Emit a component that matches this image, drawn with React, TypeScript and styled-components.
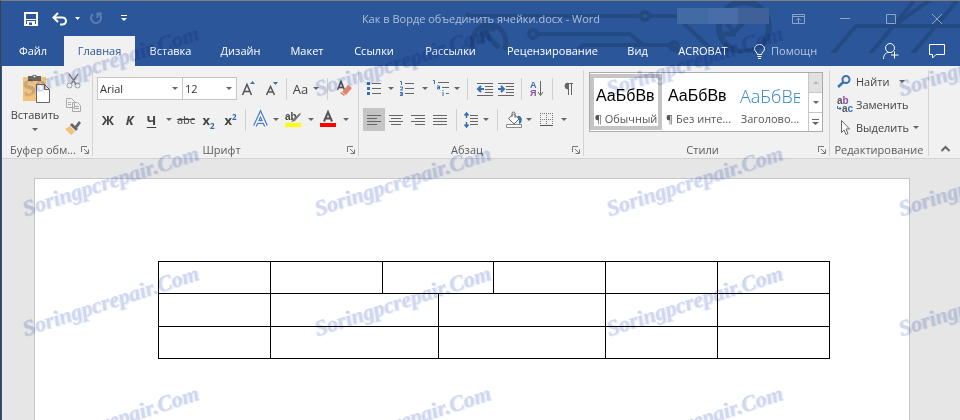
import React from "react";
import styled, { createGlobalStyle } from "styled-components";

const GlobalStyle = createGlobalStyle`
  *, *::before, *::after { box-sizing: border-box; }
  body {
    margin: 0;
    background: #e6e6e6;
    color: #444;
    font: 11px/16px "Open Sans", "Noto Sans", sans-serif;
  }
  button, select { font: inherit; color: inherit; }
  svg { display: block; flex: none; overflow: visible; }
`;

const Window = styled.div`
  position: relative;
  display: flex;
  flex-direction: column;
  min-height: 100vh;
  overflow: hidden;
  border-top: 1px solid #7f7f7f;
  border-left: 1px solid #3f3f46;
  box-shadow: inset 1px 0 #2b579a;
  padding-left: 1px;
`;

const Header = styled.header`
  position: relative;
  background: #2b579a;
  color: #fff;
`;

const Circuit = styled.svg`
  position: absolute;
  top: 0;
  right: 0;
  overflow: hidden;
  fill: none;
  stroke: #244a84;
  stroke-width: 4;
`;

const TitleBar = styled.div`
  position: relative;
  display: grid;
  grid-template-columns: 1fr auto 1fr;
  align-items: center;
  height: 35px;
`;

const QuickAccess = styled.div`
  display: flex;
  align-items: center;
  padding-left: 16px;
`;

const Title = styled.h1`
  margin: 0;
  font-size: 11px;
  font-weight: 400;
  color: #b0bfda;
  white-space: nowrap;
`;

const WindowControls = styled.div`
  display: flex;
  align-items: center;
  justify-content: flex-end;
  color: #8ca3ca;
`;

const Account = styled.div`
  display: flex;
  width: 92px;
  height: 16px;
  margin: 0 5px 6px 0;
`;

const AccountPart = styled.span<{ $color: string }>`
  flex: 1;
  background: ${(p) => p.$color};
`;

const IconButton = styled.button<{ $w: number; $on?: boolean }>`
  display: flex;
  flex: none;
  align-items: center;
  justify-content: center;
  width: ${(p) => p.$w}px;
  height: 23px;
  padding: 0;
  border: 0;
  background: ${(p) => (p.$on ? "#c5c5c5" : "transparent")};
`;

const TabBar = styled.nav`
  position: relative;
  display: flex;
  height: 30px;
  color: #fff;
`;

const Tab = styled.button<{ $w: number; $active?: boolean }>`
  flex: none;
  width: ${(p) => p.$w}px;
  padding: 0;
  border: 0;
  background: ${(p) => (p.$active ? "#f1f1f1" : "transparent")};
  color: ${(p) => (p.$active ? "#2b579a" : "#fff")};
  white-space: nowrap;
`;

const TellMe = styled.button`
  display: flex;
  align-items: center;
  gap: 6px;
  margin: 0 auto 0 10px;
  padding: 0;
  border: 0;
  background: none;
  color: #b8c6df;
`;

const TabActions = styled.div`
  display: flex;
  align-items: center;
  color: #fff;
`;

const Ribbon = styled.section`
  display: flex;
  height: 93px;
  padding: 4px 0 2px;
  background: #f1f1f1;
  border-bottom: 1px solid #d2d2d2;
`;

const Group = styled.div<{ $w?: number }>`
  display: flex;
  flex-direction: column;
  flex: ${(p) => (p.$w ? `0 0 ${p.$w}px` : "1 1 0")};
  min-width: 0;
  border-right: 1px solid #d4d4d4;
`;

const GroupBody = styled.div`
  display: flex;
  flex: 1;
  padding: 0 4px;
`;

const GroupFoot = styled.div`
  display: flex;
  align-items: center;
  height: 12px;
  padding: 0 3px;
  color: #5c5c5c;
`;

const GroupName = styled.span`
  flex: 1;
  text-align: center;
  white-space: nowrap;
`;

const Launcher = styled.button`
  width: 8px;
  padding: 0;
  border: 0;
  background: none;
`;

const Rows = styled.div`
  display: flex;
  flex-direction: column;
  gap: 8px;
  padding-top: 7px;
`;

const Row = styled.div`
  display: flex;
  align-items: center;
  height: 23px;
`;

const Divider = styled.span<{ $w: number }>`
  display: flex;
  flex: none;
  justify-content: center;
  width: ${(p) => p.$w}px;
  height: 22px;
  &::before { content: ""; width: 1px; background: #d0d0d0; }
`;

const Combo = styled.label<{ $w: number }>`
  display: flex;
  align-items: center;
  width: ${(p) => p.$w}px;
  height: 23px;
  padding: 0 4px 0 2px;
  border: 1px solid #c6c6c6;
  background: #fff;
  & + & { margin-left: -1px; }
`;

const ComboSelect = styled.select`
  flex: 1;
  min-width: 0;
  padding: 0;
  border: 0;
  appearance: none;
  background: none;
  color: #333;
`;

const Glyph = styled.span<{ $size: number; $bold?: boolean; $italic?: boolean; $line?: string }>`
  font-size: ${(p) => p.$size}px;
  line-height: 20px;
  font-weight: ${(p) => (p.$bold ? 700 : 400)};
  font-style: ${(p) => (p.$italic ? "italic" : "normal")};
  text-decoration: ${(p) => p.$line ?? "none"};
  text-underline-offset: 2px;
  sub, sup { font-size: 8px; line-height: 8px; color: #2b6cb0; }
`;

const PasteButton = styled.button`
  display: flex;
  flex-direction: column;
  align-items: center;
  width: 58px;
  padding: 3px 0 0;
  border: 0;
  background: none;
`;

const PasteLabel = styled.span`
  margin: 3px 0 5px;
  line-height: 16px;
`;

const ClipTools = styled.div`
  display: flex;
  flex-direction: column;
`;

const Gallery = styled.div`
  display: flex;
  flex: 1;
  align-self: flex-start;
  height: 60px;
  margin: 2px 2px 0 1px;
  border: 1px solid #ababab;
  background: #fff;
`;

const StyleItems = styled.div`
  display: flex;
  flex: 1;
  min-width: 0;
  padding: 1px 0;
  overflow: hidden;
`;

const StyleCard = styled.button<{ $on?: boolean }>`
  display: flex;
  flex: none;
  flex-direction: column;
  justify-content: flex-end;
  gap: 4px;
  width: 72px;
  padding: 0;
  border: 4px solid ${(p) => (p.$on ? "#c5c5c5" : "transparent")};
  background: none;
`;

const Sample = styled.span<{ $heading?: boolean }>`
  width: 60px;
  margin-left: 2px;
  overflow: hidden;
  color: ${(p) => (p.$heading ? "#2e86c8" : "#000")};
  font: ${(p) =>
    p.$heading
      ? '300 18px/24px "Open Sans", sans-serif'
      : '16px/24px "Liberation Sans", Arial, sans-serif'};
  text-align: left;
`;

const StyleName = styled.span`
  line-height: 14px;
  white-space: nowrap;
  color: #555;
`;

const GalleryNav = styled.div`
  display: grid;
  grid-template-rows: repeat(3, 1fr);
  width: 14px;
`;

const NavButton = styled.button<{ $off?: boolean }>`
  display: flex;
  align-items: center;
  justify-content: center;
  padding: 0;
  border: 0;
  border-left: 1px solid #c6c6c6;
  background: ${(p) => (p.$off ? "#e1e1e1" : "#fff")};
  & + & { border-top: 1px solid #c6c6c6; }
`;

const EditList = styled.div`
  display: flex;
  flex-direction: column;
  padding: 0 0 0 3px;
`;

const EditButton = styled.button`
  display: flex;
  align-items: center;
  gap: 4px;
  height: 23px;
  padding: 0;
  border: 0;
  background: none;
  white-space: nowrap;
`;

const Collapse = styled.div`
  display: flex;
  align-items: flex-end;
  width: 31px;
  padding-left: 5px;
`;

const CollapseButton = styled.button`
  display: flex;
  justify-content: center;
  width: 22px;
  padding: 4px 0;
  border: 0;
  background: none;
`;

const Workspace = styled.main`
  display: flex;
  flex: 1;
  padding: 19px 50px 0 32px;
  background: #e6e6e6;
`;

const Page = styled.article`
  flex: 1;
  padding: 82px 79px 60px 123px;
  background: #fff;
  border: 1px solid #c6c6c6;
  border-bottom: 0;
`;

const DocTable = styled.table`
  width: 100%;
  border-collapse: collapse;
  table-layout: fixed;
`;

const Cell = styled.td`
  height: 32px;
  padding: 0;
  border: 1px solid #000;
  tr:nth-child(2) > & { height: 33px; }
`;

const Watermarks = styled.div`
  position: absolute;
  inset: -20px 0 0 26px;
  display: grid;
  grid-template-columns: repeat(auto-fill, 292px);
  grid-auto-rows: 120px;
  width: 1168px;
  pointer-events: none;
  mix-blend-mode: multiply;
`;

const Watermark = styled.span`
  align-self: end;
  justify-self: start;
  transform: rotate(-18deg);
  transform-origin: left bottom;
  color: #d2d6ee;
  text-shadow: 1px 1px #e6eefb, -1px 0 #eaf2fd;
  font: italic 700 22px/24px "Liberation Serif", serif;
`;

type IconProps = { w: number; h: number; children: React.ReactNode };
const Icon = ({ w, h, children }: IconProps) => (
  <svg width={w} height={h} viewBox={`0 0 ${w} ${h}`} fill="none" stroke="currentColor" aria-hidden="true">
    {children}
  </svg>
);

const Caret = () => (
  <Icon w={6} h={3}>
    <path d="M0 0h6L3 3z" fill="#666" stroke="none" />
  </Icon>
);

const CaretButton = ({ w, label }: { w: number; label: string }) => (
  <IconButton $w={w} aria-label={label}>
    <Caret />
  </IconButton>
);

const Foot = ({ name, launcher = true }: { name: string; launcher?: boolean }) => (
  <GroupFoot>
    <GroupName>{name}</GroupName>
    {launcher && (
      <Launcher aria-label={`${name}: параметры`}>
        <Icon w={8} h={8}>
          <path d="M.5 6V.5H6M3 3l4 4M7.500 3.500v4h-4" stroke="#777" />
        </Icon>
      </Launcher>
    )}
  </GroupFoot>
);

const tabs: [string, number][] = [
  ["Файл", 62], ["Главная", 71], ["Вставка", 71], ["Дизайн", 69], ["Макет", 64],
  ["Ссылки", 70], ["Рассылки", 83], ["Рецензирование", 121], ["Вид", 49], ["ACROBAT", 82],
];

const aligns: [string, string][] = [
  ["По левому краю", "M0 .5h14M0 3.500h10M0 6.500h14M0 9.500h10"],
  ["По центру", "M0 .5h14M2 3.500h10M0 6.500h14M2 9.500h10"],
  ["По правому краю", "M0 .5h14M4 3.500h10M0 6.500h14M4 9.500h10"],
  ["По ширине", "M0 .5h14M0 3.500h14M0 6.500h14M0 9.500h14"],
];

const documentRows = [[2, 2, 2, 2, 2, 2], [2, 3, 3, 2, 2], [2, 3, 3, 2, 2]];

const smallText = { fontFamily: "Liberation Sans", fontWeight: 700, stroke: "none" } as const;

function AppHeader() {
  return (
    <Header>
      <Circuit width="520" height="52" viewBox="440 1 520 52" aria-hidden="true">
        <path d="M474 50a17 17 0 1 1 30 0M480 29h15M482 28v16M483 31l16 17" strokeWidth="5" />
        <path d="M466 14l4 2h172M537 34h93l13 11M578 50l5-5h88l8 8" />
        <circle cx="533" cy="34" r="4" />
        <circle cx="645" cy="16" r="4" />
        <path d="M649 16h27l36 34h18" />
        <circle cx="674" cy="46" r="4" />
        <circle cx="744" cy="27" r="25" strokeWidth="6" />
        <path d="M724 20l10 12 22-22M722 34h14" strokeWidth="5" />
        <path d="M832 54l24-28h104M870 54L914 1M912 54L957 1M893 26L936-4" />
      </Circuit>
      <TitleBar>
        <QuickAccess>
          <IconButton $w={26} aria-label="Сохранить">
            <Icon w={14} h={14}>
              <path d="M1 1h12v12H1z" stroke="#fff" strokeWidth="2" />
              <path d="M2 7.500h10" stroke="#fff" />
              <path d="M3 9h8v4H3z" fill="#fff" stroke="none" />
              <path d="M5 10.500h3V13H5z" fill="#2b579a" stroke="none" />
            </Icon>
          </IconButton>
          <IconButton $w={31} aria-label="Отменить">
            <Icon w={15} h={14}>
              <path d="M6 1L1.500 5.500 6 10M2 5.500h8.500a3.500 3.500 0 0 1 0 7H8" stroke="#fff" strokeWidth="2" />
            </Icon>
          </IconButton>
          <IconButton $w={5} aria-label="Список отмены">
            <Icon w={5} h={3}><path d="M0 0h5L2.500 3z" fill="#fff" stroke="none" /></Icon>
          </IconButton>
          <IconButton $w={31} aria-label="Повторить">
            <Icon w={14} h={13}>
              <path d="M4 2a5 5 0 1 0 6 0M8.500 6V1.500H13" stroke="#5a7db5" strokeWidth="2" />
            </Icon>
          </IconButton>
          <IconButton $w={26} aria-label="Настройка панели">
            <Icon w={6} h={7}>
              <path d="M0 .5h6" stroke="#fff" />
              <path d="M0 3h6L3 6z" fill="#fff" stroke="none" />
            </Icon>
          </IconButton>
        </QuickAccess>
        <Title>Как в Ворде объединить ячейки.docx - Word</Title>
        <WindowControls>
          <Account>
            {["#426ba5", "#496da8", "#3f6099"].map((c) => <AccountPart key={c} $color={c} />)}
          </Account>
          <IconButton $w={48} aria-label="Параметры ленты">
            <Icon w={13} h={10}>
              <path d="M.5.5h12v9H.5zM0 2.500h13M6.500 9V4M4 6.500L6.500 4 9 6.500" />
            </Icon>
          </IconButton>
          <IconButton $w={46} aria-label="Свернуть"><Icon w={10} h={1}><path d="M0 .5h10" /></Icon></IconButton>
          <IconButton $w={46} aria-label="Развернуть"><Icon w={10} h={10}><path d="M.5.5h9v9h-9z" /></Icon></IconButton>
          <IconButton $w={46} aria-label="Закрыть"><Icon w={10} h={10}><path d="M0 0l10 10M10 0L0 10" /></Icon></IconButton>
        </WindowControls>
      </TitleBar>
      <TabBar>
        {tabs.map(([name, w]) => (
          <Tab key={name} $w={w} $active={name === "Главная"}>{name}</Tab>
        ))}
        <TellMe>
          <Icon w={11} h={15}>
            <path d="M3.500 10.500c0-2-3-3-3-6a5 4 0 0 1 10 0c0 3-3 4-3 6zM3.500 12.500h4M4 14.500h3" stroke="#fff" />
          </Icon>
          Помощн
        </TellMe>
        <TabActions>
          <IconButton $w={46} aria-label="Общий доступ">
            <Icon w={16} h={16}>
              <circle cx="7" cy="5" r="4.500" />
              <path d="M.5 16c0-4 2-6.500 5-6.500h3M11.500 8.500v7M8 12h7.500" />
            </Icon>
          </IconButton>
          <IconButton $w={46} aria-label="Примечания">
            <Icon w={16} h={15}><path d="M.5.5h15v10H7l-3.500 3.500v-3.500h-3z" /></Icon>
          </IconButton>
        </TabActions>
      </TabBar>
    </Header>
  );
}

function ClipboardGroup() {
  return (
    <Group $w={91}>
      <GroupBody>
        <PasteButton>
          <Icon w={31} h={31}>
            <path d="M3 4h23v24H3z" fill="#f2c37c" stroke="none" />
            <path d="M8 3h4a3 3 0 0 1 5 0h4v5H8z" fill="#666" stroke="none" />
            <circle cx="14.500" cy="3.500" r="1" fill="#f1f1f1" stroke="none" />
            <path d="M16.500 11.500h8l5 5v13h-13zM24.500 11.500v5h5" fill="#fff" stroke="#666" />
          </Icon>
          <PasteLabel>Вставить</PasteLabel>
          <Caret />
        </PasteButton>
        <ClipTools>
          <IconButton $w={18} aria-label="Вырезать">
            <Icon w={15} h={15}>
              <path d="M3 0l7 10M12 0L5 10" stroke="#888" strokeWidth="1.500" />
              <circle cx="3.500" cy="11.500" r="2.500" stroke="#999" />
              <circle cx="11.500" cy="11.500" r="2.500" stroke="#999" />
            </Icon>
          </IconButton>
          <IconButton $w={18} aria-label="Копировать">
            <Icon w={15} h={14}>
              <path d="M.5.5h5l3 3v6h-8zM6.500 4.500h5l3 3v6h-8z" fill="#f1f1f1" stroke="#aaa" />
              <path d="M2 4.500h3M2 6.500h3M8 8.500h5M8 10.500h5" stroke="#aaa" />
            </Icon>
          </IconButton>
          <IconButton $w={18} aria-label="Формат по образцу">
            <Icon w={16} h={14}>
              <path d="M0 8l5-3 5 6-4 3z" fill="#f2c37c" stroke="none" />
              <path d="M5 4l2-2 6 6-2 2zM10 5l4-5 2 2-4 5z" fill="#666" stroke="none" />
            </Icon>
          </IconButton>
        </ClipTools>
      </GroupBody>
      <Foot name="Буфер обм..." />
    </Group>
  );
}

function FontGroup() {
  return (
    <Group $w={266}>
      <GroupBody>
        <Rows>
          <Row>
            <Combo $w={86}>
              <ComboSelect aria-label="Шрифт"><option>Arial</option></ComboSelect>
              <Caret />
            </Combo>
            <Combo $w={55}>
              <ComboSelect aria-label="Размер шрифта"><option>12</option></ComboSelect>
              <Caret />
            </Combo>
            <IconButton $w={24} aria-label="Увеличить размер">
              <Icon w={14} h={15}>
                <path d="M.5 14L5 3.500 9.500 14M2 10.500h6" stroke="#555" strokeWidth="1.500" />
                <path d="M8 3h5L10.500 0z" fill="#3b6fb5" stroke="none" />
              </Icon>
            </IconButton>
            <IconButton $w={22} aria-label="Уменьшить размер">
              <Icon w={13} h={15}>
                <path d="M.5 14L4.500 5.500 8.500 14M2 11h5" stroke="#555" strokeWidth="1.500" />
                <path d="M7 1h5L9.500 4z" fill="#3b6fb5" stroke="none" />
              </Icon>
            </IconButton>
            <Divider $w={7} />
            <IconButton $w={21} aria-label="Регистр"><Glyph $size={13}>Aa</Glyph></IconButton>
            <CaretButton w={9} label="Варианты регистра" />
            <Divider $w={15} />
            <IconButton $w={18} aria-label="Удалить форматирование">
              <Icon w={15} h={16}>
                <path d="M.5 9L4 .5 7.500 9M2 6.500h4" stroke="#555" strokeWidth="1.500" />
                <path d="M5 11l6-7 4 3-6 7z" fill="#e2836b" stroke="none" />
                <path d="M3 12l1-1 4 3-1 1z" fill="#e2836b" stroke="none" />
              </Icon>
            </IconButton>
          </Row>
          <Row>
            <IconButton $w={22} aria-label="Полужирный"><Glyph $size={13} $bold>Ж</Glyph></IconButton>
            <IconButton $w={21} aria-label="Курсив"><Glyph $size={13} $bold $italic>К</Glyph></IconButton>
            <IconButton $w={23} aria-label="Подчеркнутый"><Glyph $size={13} $bold $line="underline">Ч</Glyph></IconButton>
            <CaretButton w={11} label="Варианты подчеркивания" />
            <IconButton $w={24} aria-label="Зачеркнутый"><Glyph $size={11} $line="line-through">abc</Glyph></IconButton>
            <IconButton $w={21} aria-label="Подстрочный"><Glyph $size={13} $bold>x<sub>2</sub></Glyph></IconButton>
            <IconButton $w={23} aria-label="Надстрочный"><Glyph $size={13} $bold>x<sup>2</sup></Glyph></IconButton>
            <Divider $w={7} />
            <IconButton $w={22} aria-label="Текстовые эффекты">
              <Icon w={15} h={15}>
                <path d="M2 14L7.500 2 13 14M4 10h7" stroke="#4a7cc0" strokeWidth="4" />
                <path d="M2 14L7.500 2 13 14M4 10h7" stroke="#fff" strokeWidth="1.500" />
              </Icon>
            </IconButton>
            <CaretButton w={9} label="Варианты эффектов" />
            <IconButton $w={27} aria-label="Цвет выделения">
              <Icon w={17} h={17}>
                <text x="0" y="9" fontSize="10" fill="#444" {...smallText}>ab</text>
                <path d="M6 11l2-3 7-6 1 1-6 7z" fill="#777" stroke="none" />
                <path d="M0 12h16v4H0z" fill="#ff0" stroke="none" />
              </Icon>
            </IconButton>
            <CaretButton w={8} label="Цвета выделения" />
            <IconButton $w={26} aria-label="Цвет текста">
              <Icon w={16} h={17}>
                <path d="M4 10.500L8 1l4 9.500M5 7.500h6" stroke="#555" strokeWidth="2" />
                <path d="M0 12h16v4H0z" fill="#f00" stroke="none" />
              </Icon>
            </IconButton>
            <CaretButton w={9} label="Цвета текста" />
          </Row>
        </Rows>
      </GroupBody>
      <Foot name="Шрифт" />
    </Group>
  );
}

function ParagraphGroup() {
  return (
    <Group $w={225}>
      <GroupBody>
        <Rows>
          <Row>
            <IconButton $w={22} aria-label="Маркеры">
              <Icon w={14} h={15}>
                <path d="M5 2.500h9M5 7.500h9M5 12.500h9" stroke="#666" />
                <path d="M0 1h3v3H0zM0 6h3v3H0zM0 11h3v3H0z" fill="#3b6fb5" stroke="none" />
              </Icon>
            </IconButton>
            <CaretButton w={11} label="Виды маркеров" />
            <IconButton $w={23} aria-label="Нумерация">
              <Icon w={15} h={17}>
                <path d="M5 3.500h9M5 8.500h9M5 13.500h9" stroke="#666" />
                <path d="M0 1.500h1.500V5M0 7h2.500v1.500L.5 10H3M0 12.500h2.500v1.500h-2 2v1.500H0" stroke="#3b6fb5" />
              </Icon>
            </IconButton>
            <CaretButton w={11} label="Виды нумерации" />
            <IconButton $w={22} aria-label="Многоуровневый список">
              <Icon w={17} h={17}>
                <path d="M5 2.500h11M9 7.500h7M13 13.500h3" stroke="#666" />
                <path d="M0 .5h1.500V4M4 6h2.500v3H4.500V7.500h2M10 10v1M10 12v4" stroke="#3b6fb5" />
              </Icon>
            </IconButton>
            <CaretButton w={9} label="Виды списков" />
            <Divider $w={13} />
            <IconButton $w={21} aria-label="Уменьшить отступ">
              <Icon w={16} h={14}>
                <path d="M0 1.500h16M8 4.500h8M8 7.500h8M8 10.500h8M0 13.500h16" stroke="#666" />
                <path d="M1 7h6M4 4L1 7l3 3" stroke="#3b6fb5" strokeWidth="2" />
              </Icon>
            </IconButton>
            <IconButton $w={22} aria-label="Увеличить отступ">
              <Icon w={16} h={14}>
                <path d="M0 1.500h16M8 4.500h8M8 7.500h8M8 10.500h8M0 13.500h16" stroke="#666" />
                <path d="M0 7h6M3 4l3 3-3 3" stroke="#3b6fb5" strokeWidth="2" />
              </Icon>
            </IconButton>
            <Divider $w={9} />
            <IconButton $w={22} aria-label="Сортировка">
              <Icon w={14} h={16}>
                <text x="0" y="7" fontSize="9" fill="#3b6fb5" {...smallText}>А</text>
                <text x="0" y="15" fontSize="9" fill="#8650a8" {...smallText}>Я</text>
                <path d="M10.500 0v14M8 11l2.500 3.500L13 11" stroke="#666" />
              </Icon>
            </IconButton>
            <Divider $w={9} />
            <IconButton $w={22} aria-label="Непечатаемые знаки">
              <Icon w={10} h={12}>
                <path d="M5 0a3 3 0 0 0 0 6z" fill="#666" stroke="#666" />
                <path d="M4 .5h6M5.500 0v12M8.500 0v12" stroke="#666" />
              </Icon>
            </IconButton>
          </Row>
          <Row>
            {aligns.map(([label, d], i) => (
              <IconButton key={label} $w={22} $on={i === 0} aria-label={label}>
                <Icon w={14} h={10}><path d={d} stroke="#666" /></Icon>
              </IconButton>
            ))}
            <Divider $w={10} />
            <IconButton $w={20} aria-label="Интервал">
              <Icon w={14} h={16}>
                <path d="M6 3.500h8M6 6.500h8M6 9.500h8M6 12.500h8" stroke="#666" />
                <path d="M2.500 1v5M.5 3.500l2-2.500 2 2.500M2.500 10v5M.5 12.500l2 2.500 2-2.500" stroke="#3b6fb5" strokeWidth="1.500" />
              </Icon>
            </IconButton>
            <CaretButton w={9} label="Варианты интервала" />
            <Divider $w={14} />
            <IconButton $w={20} aria-label="Заливка">
              <Icon w={17} h={16}>
                <path d="M2.500 6.500l5-4.500 5.500 5-5 5z" fill="#fff" stroke="#666" />
                <path d="M6 5V1.500a1.500 1.500 0 0 1 3 0V6" stroke="#666" />
                <path d="M11 4h3l2 3-1 4-2 1V7z" fill="#3b6fb5" stroke="none" />
                <path d="M.5 12.500h15v3H.5z" fill="#fff" stroke="#888" />
              </Icon>
            </IconButton>
            <CaretButton w={10} label="Цвета заливки" />
            <IconButton $w={24} aria-label="Границы">
              <Icon w={13} h={13}>
                <path d="M0 .5h13M0 6.500h13M.5 0v12M6.500 0v12M12.500 0v12" stroke="#777" strokeDasharray="1 1" />
                <path d="M0 12.500h13" stroke="#555" />
              </Icon>
            </IconButton>
            <CaretButton w={11} label="Виды границ" />
          </Row>
        </Rows>
      </GroupBody>
      <Foot name="Абзац" />
    </Group>
  );
}

function StylesGroup() {
  return (
    <Group>
      <GroupBody>
        <Gallery>
          <StyleItems>
            <StyleCard $on><Sample>АаБбВв</Sample><StyleName>¶ Обычный</StyleName></StyleCard>
            <StyleCard><Sample>АаБбВв</Sample><StyleName>¶ Без инте...</StyleName></StyleCard>
            <StyleCard><Sample $heading>АаБбВв</Sample><StyleName>Заголово...</StyleName></StyleCard>
          </StyleItems>
          <GalleryNav>
            <NavButton $off aria-label="Вверх">
              <Icon w={6} h={3}><path d="M0 3h6L3 0z" fill="#bbb" stroke="none" /></Icon>
            </NavButton>
            <NavButton aria-label="Вниз">
              <Icon w={6} h={3}><path d="M0 0h6L3 3z" fill="#666" stroke="none" /></Icon>
            </NavButton>
            <NavButton aria-label="Все стили">
              <Icon w={7} h={6}>
                <path d="M0 .5h7" stroke="#666" />
                <path d="M0 3h7L3.500 6z" fill="#666" stroke="none" />
              </Icon>
            </NavButton>
          </GalleryNav>
        </Gallery>
      </GroupBody>
      <Foot name="Стили" />
    </Group>
  );
}

function EditingGroup() {
  return (
    <Group $w={99}>
      <GroupBody>
        <EditList>
          <EditButton>
            <Icon w={15} h={13}>
              <circle cx="9" cy="4.500" r="3.500" stroke="#3b6fb5" strokeWidth="2" />
              <path d="M6.500 7L1 12" stroke="#3b6fb5" strokeWidth="2.500" />
            </Icon>
            Найти
            <IconButton as="span" $w={18}><Caret /></IconButton>
          </EditButton>
          <EditButton>
            <Icon w={15} h={16}>
              <text x="0" y="7" fontSize="10" fill="#555" {...smallText}>a<tspan fill="#8650a8">b</tspan></text>
              <text x="5" y="15" fontSize="10" fill="#555" {...smallText}>a<tspan fill="#3b6fb5">c</tspan></text>
              <path d="M.5 9v2.500H4M2.500 10L4 11.500 2.500 13" stroke="#3b6fb5" />
            </Icon>
            Заменить
          </EditButton>
          <EditButton>
            <Icon w={15} h={15}>
              <path d="M4.500.5v12L7 10l2 4.500 2-1L9 9h3.500z" fill="#fff" stroke="#666" />
            </Icon>
            Выделить
            <Caret />
          </EditButton>
        </EditList>
      </GroupBody>
      <Foot name="Редактирование" launcher={false} />
    </Group>
  );
}

export default function App() {
  return (
    <>
      <GlobalStyle />
      <Window>
        <AppHeader />
        <Ribbon>
          <ClipboardGroup />
          <FontGroup />
          <ParagraphGroup />
          <StylesGroup />
          <EditingGroup />
          <Collapse>
            <CollapseButton aria-label="Свернуть ленту">
              <Icon w={9} h={6}><path d="M.5 5l4-4 4 4" stroke="#666" strokeWidth="2" /></Icon>
            </CollapseButton>
          </Collapse>
        </Ribbon>
        <Workspace>
          <Page>
            <DocTable>
              <colgroup>{Array.from({ length: 12 }, (_, i) => <col key={i} />)}</colgroup>
              <tbody>
                {documentRows.map((row, r) => (
                  <tr key={r}>{row.map((span, c) => <Cell key={c} colSpan={span} />)}</tr>
                ))}
              </tbody>
            </DocTable>
          </Page>
        </Workspace>
        <Watermarks aria-hidden="true">
          {Array.from({ length: 16 }, (_, i) => <Watermark key={i}>Soringpcrepair.Com</Watermark>)}
        </Watermarks>
      </Window>
    </>
  );
}
